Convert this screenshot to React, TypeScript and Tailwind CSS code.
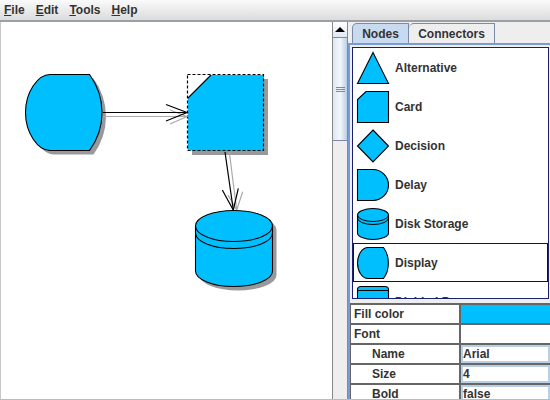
import React from "react";

const B = "#00bfff";
const S = { fill: B, stroke: "#000", strokeWidth: 1.1 } as const;

const icons: Record<string, React.ReactNode> = {
  Alternative: <path d="M17 4.5 L32.5 35.5 L1.5 35.5 Z" {...S} />,
  Card: <path d="M10 4.5 H32.5 V35.5 H1.5 V12.5 Z" {...S} />,
  Decision: <path d="M17 4 L32.5 20 L17 36 L1.5 20 Z" {...S} />,
  Delay: <path d="M1.5 4.5 H17 A15.5 15.5 0 0 1 17 35.5 H1.5 Z" {...S} />,
  "Disk Storage": (
    <>
      <path d="M1.5 11 A15.5 6.5 0 0 1 32.5 11 V29 A15.5 6.5 0 0 1 1.5 29 Z" {...S} />
      <path d="M1.5 11 A15.5 6.5 0 0 0 32.5 11" fill="none" stroke="#000" />
      <path d="M1.5 14 A15.5 6.5 0 0 0 32.5 14" fill="none" stroke="#000" />
    </>
  ),
  Display: <path d="M12 4.5 H27.5 C34 13 34 27 27.5 35.5 H12 C6 35.5 1.5 28 1.5 20 C1.5 12 6 4.5 12 4.5 Z" {...S} />,
  "Divided Process": (
    <>
      <path d="M1.5 7.5 Q1.5 4.5 5 4.5 H29 Q32.5 4.5 32.5 7.5 V36 H1.5 Z" {...S} />
      <path d="M1.5 8.5 H32.5" stroke="#000" />
    </>
  ),
};

const Arrow = ({ shaft, head, color }: { shaft: string; head: string; color: string }) => (
  <>
    <path d={shaft} stroke={color} strokeWidth="1.2" fill="none" />
    <path d={head} stroke={color} strokeWidth="1.2" fill="none" />
  </>
);

function Canvas() {
  return (
    <svg width="332" height="378" viewBox="0 0 332 378" className="block">
      {/* shifted by canvas origin x=1, y=22 */}
      <g transform="translate(-1 -22)">
        {/* display shape */}
        <path d="M54 78.5 H93.5 A64 64 0 0 1 93.5 154.5 H54 C42 154.5 29.5 137 29.5 116.5 C29.5 96 42 78.5 54 78.5 Z" fill="#999" />
        <path d="M50 74.5 H89.5 A64 64 0 0 1 89.5 150.5 H50 C38 150.5 25.5 133 25.5 112.5 C25.5 92 38 74.5 50 74.5 Z" {...S} />
        {/* selected card */}
        <path d="M215 79 H268 V155 H192 V102 Z" fill="#999" />
        <path d="M188 98 L211 75 H264 V150.5 H188 Z" fill={B} />
        <path d="M188 98 L211 75" stroke="#000" strokeWidth="1.1" fill="none" />
        <rect x="187.5" y="74.5" width="76" height="76" fill="none" stroke="#000" strokeWidth="1.2" strokeDasharray="3 2" />
        {/* arrow 1 */}
        <Arrow shaft="M103 116.5 H186" head="M170 110 L187 116.5 L170 124" color="#aaa" />
        <Arrow shaft="M103 112.5 H187" head="M166 104.5 L187 112.5 L166 121" color="#000" />
        {/* arrow 2 */}
        <Arrow shaft="M229.3 152 L236.7 210" head="M228 195 L236.7 210 L242.7 191.7" color="#aaa" />
        <Arrow shaft="M225 152 L233.3 210" head="M222.3 190 L233.3 210 L238.3 188.3" color="#000" />
        {/* disk */}
        <path d="M199.5 230 A38.5 15.5 0 0 1 276.5 230 V275 A38.5 15.5 0 0 1 199.5 275 Z" fill="#999" />
        <path d="M195.5 226 A38.5 15.5 0 0 1 272.5 226 V271 A38.5 15.5 0 0 1 195.5 271 Z" {...S} />
        <path d="M195.5 226 A38.5 15.5 0 0 0 272.5 226" fill="none" stroke="#000" strokeWidth="1.1" />
        <path d="M195.5 233 A38.5 15.5 0 0 0 272.5 233" fill="none" stroke="#000" strokeWidth="1.1" />
      </g>
    </svg>
  );
}

function NodeRow({ name, selected }: { name: string; selected?: boolean }) {
  return (
    <div className={`flex h-[39px] shrink-0 items-center border ${selected ? "border-[#0000cc]" : "border-transparent"}`}>
      <svg width="34" height="37" viewBox="0 1 34 37" className="ml-[2px] shrink-0">
        {icons[name]}
      </svg>
      <span className="ml-[5px] text-[12px] font-bold text-[#333]">{name}</span>
    </div>
  );
}

function PropRow({ label, value, indent, fill }: { label: string; value?: string; indent?: boolean; fill?: boolean }) {
  return (
    <div className="flex h-[20px] shrink-0 border-b-2 border-[#666]">
      <div className={`flex w-[110px] shrink-0 items-center border-r-2 border-[#666] bg-white text-[12px] font-bold text-[#333] ${indent ? "pl-[21px]" : "pl-[3px]"}`}>
        {label}
      </div>
      <div
        className={`min-w-0 flex-1 ${fill ? "bg-[#00bfff]" : value ? "border-2 border-[#b8cfe5] bg-white text-[12px] leading-[14px] font-bold text-[#333]" : "bg-white"}`}
      >
        {value}
      </div>
    </div>
  );
}

export default function App() {
  return (
    <div className="flex h-[400px] w-[550px] flex-col overflow-hidden bg-[#eeeeee] font-['Liberation_Sans',Arial,sans-serif]">
      <div className="flex h-[22px] shrink-0 items-center gap-[11px] border-b-2 border-b-[#99a0a8] bg-gradient-to-b from-[#fafafa] to-[#dcdcdc] pb-[1px] pl-[4px] text-[12px] font-bold text-[#333]">
        <span><u>F</u>ile</span>
        <span><u>E</u>dit</span>
        <span><u>T</u>ools</span>
        <span><u>H</u>elp</span>
      </div>
      <div className="flex min-h-0 flex-1 border-b border-[#bbb]">
        <div className="w-[333px] shrink-0 overflow-hidden border-r border-l border-[#c8c8c8] border-r-[#888] bg-white">
          <Canvas />
        </div>
        <div className="flex w-[15px] shrink-0 flex-col border-r border-[#7a8aa8] bg-[#eeeeee]">
          <div className="flex h-[16px] shrink-0 items-center justify-center border-b border-[#7a8aa8] bg-gradient-to-b from-white to-[#dfe8f3]">
            <div className="h-0 w-0 border-x-[5px] border-b-[5px] border-x-transparent border-b-black" />
          </div>
          <div className="flex h-[103px] shrink-0 flex-col items-center justify-center gap-[1px] border-b border-[#7a8aa8] bg-gradient-to-r from-[#dbe6f4] via-[#f4f8fc] to-[#b8cfe5]">
            <div className="h-px w-[9px] bg-[#7a8aa8]" />
            <div className="h-px w-[9px] bg-[#7a8aa8]" />
            <div className="h-px w-[9px] bg-[#7a8aa8]" />
          </div>
        </div>
        <div className="flex min-w-0 flex-1 flex-col pt-[1px]">
          <div className="ml-[4px] flex h-[20px] shrink-0 items-stretch text-[12px] font-bold text-[#333]">
            <div className="flex w-[57px] items-center justify-center rounded-tl-[5px] border-x border-t border-[#7a8aa8] bg-[#c8daef]">Nodes</div>
            <div className="flex w-[86px] items-center justify-center rounded-tl-[5px] border-t border-r border-[#7a8aa8] bg-[#eeeeee]">Connectors</div>
          </div>
          <div className="flex min-h-0 flex-1 flex-col border-t-2 border-l-2 border-[#7a9ad0] bg-[#eeeeee] pt-[2px]">
            <div className="mr-[1px] ml-[2px] flex h-[252px] shrink-0 flex-col overflow-hidden border-[1.5px] border-[#1a2070] bg-white">
              <NodeRow name="Alternative" />
              <NodeRow name="Card" />
              <NodeRow name="Decision" />
              <NodeRow name="Delay" />
              <NodeRow name="Disk Storage" />
              <NodeRow name="Display" selected />
              <NodeRow name="Divided Process" />
            </div>
            <div className="h-[4px] shrink-0 bg-[#eeeeee]" />
            <div className="flex flex-col overflow-hidden border-t-2 border-l border-[#666]">
              <PropRow label="Fill color" fill />
              <PropRow label="Font" />
              <PropRow label="Name" value="Arial" indent />
              <PropRow label="Size" value="4" indent />
              <PropRow label="Bold" value="false" indent />
            </div>
          </div>
        </div>
      </div>
    </div>
  );
}
